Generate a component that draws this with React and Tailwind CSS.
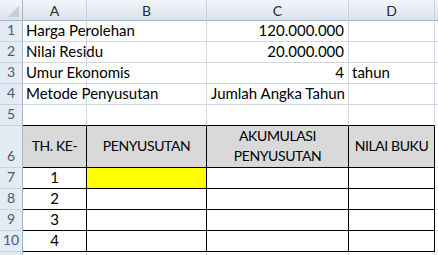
import React from 'react';

const FONT = { fontFamily: 'Lato, "Open Sans", sans-serif' };

const colLetters = ['A', 'B', 'C', 'D', ''];

function ColHeader({ label, last }) {
  return (
    <div
      className={`flex items-center justify-center bg-gradient-to-b from-[#f2f5fa] to-[#dbe3ee] border-b border-[#9eb6ce] text-[14px] text-[#2a2a2a] ${last ? '' : 'border-r border-r-[#c5d3e1]'}`}
    >
      {label}
    </div>
  );
}

function RowHeader({ n }) {
  return (
    <div className="flex items-end justify-center pb-[1px] bg-[#e4ebf5] border-r border-[#9eb6ce] border-b border-b-[#c5d3e1] text-[14px] text-[#4b5a6e]">
      {n}
    </div>
  );
}

function Cell({ children, align = 'left', table, head, yellow, above }) {
  const border = table
    ? 'border-r border-b border-black'
    : above
    ? 'border-r border-r-[#d0d7e5] border-b border-b-black'
    : 'border-r border-b border-[#d0d7e5]';
  const bg = yellow ? 'bg-[#ffff00]' : head ? 'bg-[#d9d9d9]' : 'bg-white';
  const justify =
    align === 'right' ? 'justify-end text-right' : align === 'center' ? 'justify-center text-center' : 'justify-start';
  const text = head ? 'text-[14px] tracking-[-0.4px] leading-[20px]' : 'text-[15px] leading-[19px]';
  return (
    <div
      className={`relative flex ${head ? 'items-center' : 'items-end'} ${justify} ${border} ${bg} px-[3px] pb-[1px] ${text} text-black whitespace-nowrap overflow-visible`}
    >
      {children}
    </div>
  );
}

function Edge() {
  return <div className="border-b border-[#d0d7e5] bg-white" />;
}

export default function App() {
  const top = [
    ['Harga Perolehan', '', '120.000.000', ''],
    ['Nilai Residu', '', '20.000.000', ''],
    ['Umur Ekonomis', '', '4', 'tahun'],
    ['Metode Penyusutan', '', 'Jumlah Angka Tahun', ''],
  ];

  return (
    <div
      className="w-[438px] h-[255px] overflow-hidden bg-white grid grid-cols-[23px_64px_120px_142px_86px_3px] grid-rows-[21px_21px_21px_21px_21px_21px_42px_21px_21px_21px_21px_3px]"
      style={FONT}
    >
      {/* column headers */}
      <div className="relative bg-gradient-to-b from-[#f2f5fa] to-[#dbe3ee] border-r border-b border-[#9eb6ce]">
        <div className="absolute right-[3px] bottom-[3px] w-0 h-0 border-l-[11px] border-l-transparent border-b-[11px] border-b-[#c2cedc]" />
      </div>
      {colLetters.map((c, i) => (
        <ColHeader key={i} label={c} last={i === 4} />
      ))}

      {/* rows 1-4 */}
      {top.map((r, i) => (
        <React.Fragment key={i}>
          <RowHeader n={i + 1} />
          <Cell>
            <span className="relative z-10">{r[0]}</span>
          </Cell>
          <Cell />
          <Cell align={i === 3 ? 'left' : 'right'}>
            <span className={i === 3 ? 'pl-[1px]' : 'pr-[1px]'}>{r[2]}</span>
          </Cell>
          <Cell>{r[3]}</Cell>
          <Edge />
        </React.Fragment>
      ))}

      {/* row 5 */}
      <RowHeader n={5} />
      <Cell above />
      <Cell above />
      <Cell above />
      <Cell above />
      <Edge />

      {/* row 6 - table header */}
      <RowHeader n={6} />
      <Cell table head align="center">TH. KE-</Cell>
      <Cell table head align="center">PENYUSUTAN</Cell>
      <Cell table head align="center">
        <span>
          AKUMULASI
          <br />
          PENYUSUTAN
        </span>
      </Cell>
      <Cell table head align="center">NILAI BUKU</Cell>
      <Edge />

      {/* rows 7-10 */}
      {[1, 2, 3, 4].map((n) => (
        <React.Fragment key={n}>
          <RowHeader n={n + 6} />
          <Cell table align="center">{n}</Cell>
          <Cell table yellow={n === 1} />
          <Cell table />
          <Cell table />
          <Edge />
        </React.Fragment>
      ))}

      {/* row 11 partial */}
      <div className="bg-[#e4ebf5] border-r border-[#9eb6ce]" />
      <div className="border-r border-[#d0d7e5]" />
      <div className="border-r border-[#d0d7e5]" />
      <div className="border-r border-[#d0d7e5]" />
      <div className="border-r border-[#d0d7e5]" />
      <div />
    </div>
  );
}
